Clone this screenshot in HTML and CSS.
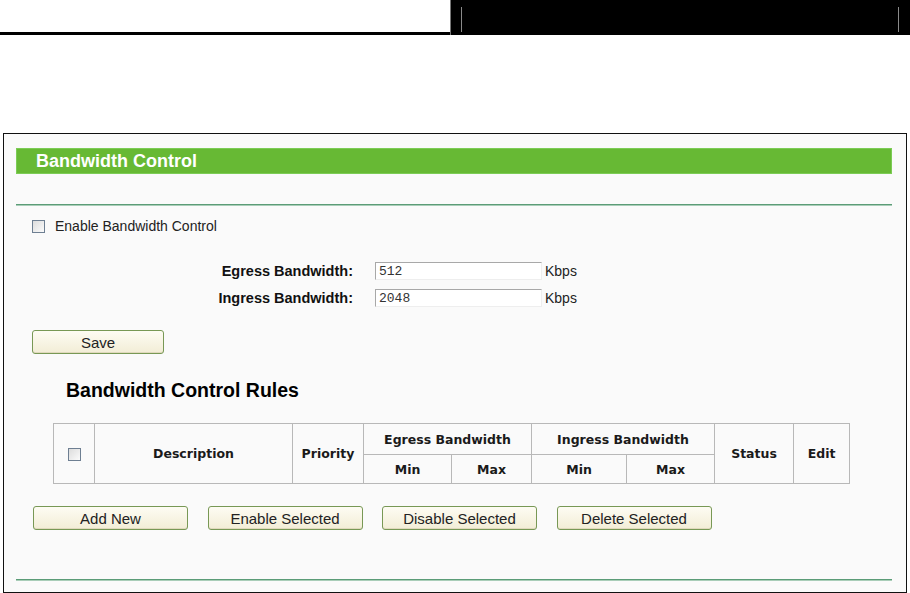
FILE: index.html
```html
<!DOCTYPE html>
<html>
<head>
<meta charset="utf-8">
<title>Bandwidth Control</title>
<link rel="stylesheet" href="styles.css">
</head>
<body>
<div class="header">
  <div class="header-left"></div>
  <div class="header-right"><div class="header-inner"></div></div>
</div>
<div class="panel">
  <div class="title-bar">Bandwidth Control</div>
  <div class="sep"></div>
  <label class="enable-row"><span class="cb"></span><span>Enable Bandwidth Control</span></label>
  <div class="form">
    <div class="form-row">
      <span class="form-label">Egress Bandwidth:</span>
      <span class="input">512</span>
      <span class="unit">Kbps</span>
    </div>
    <div class="form-row">
      <span class="form-label">Ingress Bandwidth:</span>
      <span class="input">2048</span>
      <span class="unit">Kbps</span>
    </div>
  </div>
  <button class="btn btn-save">Save</button>
  <h2 class="rules-title">Bandwidth Control Rules</h2>
  <table class="rules">
    <colgroup>
      <col class="c1"><col class="c2"><col class="c3"><col class="c4"><col class="c5"><col class="c6"><col class="c7"><col class="c8"><col class="c9">
    </colgroup>
    <tr class="r1">
      <th rowspan="2"><span class="cb cb-table"></span></th>
      <th rowspan="2">Description</th>
      <th rowspan="2">Priority</th>
      <th colspan="2">Egress Bandwidth</th>
      <th colspan="2">Ingress Bandwidth</th>
      <th rowspan="2">Status</th>
      <th rowspan="2">Edit</th>
    </tr>
    <tr class="r2">
      <th>Min</th><th>Max</th><th>Min</th><th>Max</th>
    </tr>
  </table>
  <div class="actions">
    <button class="btn btn-wide">Add New</button>
    <button class="btn btn-wide">Enable Selected</button>
    <button class="btn btn-wide">Disable Selected</button>
    <button class="btn btn-wide">Delete Selected</button>
  </div>
  <div class="sep sep-bottom"></div>
</div>
</body>
</html>
```
FILE: styles.css
```css
html, body {
  margin: 0;
  padding: 0;
  background: #ffffff;
  font-family: "Liberation Sans", Arial, sans-serif;
  color: #1a1a1a;
}

.header {
  display: flex;
  height: 35px;
}
.header-left {
  width: 450px;
  height: 32px;
  border-bottom: 3px solid #000;
}
.header-right {
  flex: 1;
  background: #000;
  border-left: 1px solid #777;
  padding: 7px 11px 0 10px;
  box-sizing: border-box;
}
.header-inner {
  height: 25px;
  border-left: 1px solid #8a8a8a;
  border-right: 1px solid #8a8a8a;
}

.panel {
  margin: 98px 0 0 3px;
  width: 904px;
  box-sizing: border-box;
  border: 1px solid #111;
  background: #fafafa;
  padding: 14px 14px 11px 12px;
}

.title-bar {
  height: 26px;
  line-height: 25px;
  background: #67b934;
  color: #fff;
  font-weight: bold;
  font-size: 18px;
  padding-left: 19px;
  box-sizing: border-box;
  border: 1px solid #7ccc55;
}

.sep {
  margin-top: 30px;
  height: 2px;
  background: #5b9c77;
  border-bottom: 1px solid #a9cdb8;
  box-sizing: border-box;
}

.enable-row {
  display: flex;
  align-items: center;
  margin: 13px 0 0 16px;
  height: 14px;
  font-size: 14px;
  color: #222;
}
.cb {
  display: inline-block;
  width: 11px;
  height: 11px;
  border: 1px solid #6e7f92;
  background: linear-gradient(135deg, #dcdcdc, #fbfbfb);
  margin-right: 10px;
  flex: none;
}

.form {
  margin-top: 29px;
  display: flex;
  flex-direction: column;
  gap: 9px;
}
.form-row {
  display: flex;
  align-items: center;
  height: 18px;
}
.form-label {
  width: 337px;
  text-align: right;
  font-weight: bold;
  font-size: 14.5px;
  color: #111;
}
.input {
  margin-left: 22px;
  width: 167px;
  height: 18px;
  box-sizing: border-box;
  background: #fff;
  border-top: 1px solid #a8a8a8;
  border-left: 1px solid #a8a8a8;
  border-right: 1px solid #eeeeee;
  border-bottom: 1px solid #eeeeee;
  font-family: "Liberation Mono", "Courier New", monospace;
  font-size: 13px;
  line-height: 17px;
  padding-left: 3px;
  color: #333;
}
.unit {
  margin-left: 3px;
  font-size: 14px;
  color: #222;
}

.btn {
  display: block;
  height: 24px;
  box-sizing: border-box;
  border: 1px solid #789855;
  border-radius: 3px;
  background: linear-gradient(#fdfcf3, #f2edd6);
  font-family: "Liberation Sans", Arial, sans-serif;
  font-size: 15px;
  color: #222;
  padding: 0;
  box-shadow: inset 0 -1px 0 #e0d9bd;
}
.btn-save {
  margin: 23px 0 0 16px;
  width: 132px;
}

.rules-title {
  margin: 25px 0 0 50px;
  font-size: 19.5px;
  line-height: 22px;
  font-weight: bold;
  color: #000;
}

.rules {
  margin: 22px 0 0 37px;
  border-collapse: collapse;
  table-layout: fixed;
  width: 797px;
  border: 1px solid #a5a5a5;
  background: #fafafa;
}
.rules th {
  border: 1px solid #b8b8b8;
  font-family: "DejaVu Sans", Verdana, sans-serif;
  font-size: 12.5px;
  font-weight: bold;
  color: #1a1a1a;
  padding: 0;
  text-align: center;
}
.rules .r1 th { height: 30px; }
.rules .r2 th { height: 28px; }
.cb-table { margin: 0; vertical-align: middle; }
.c1 { width: 41px; }
.c2 { width: 198px; }
.c3 { width: 71px; }
.c4 { width: 88px; }
.c5 { width: 80px; }
.c6 { width: 95px; }
.c7 { width: 88px; }
.c8 { width: 79px; }
.c9 { width: 56px; }

.actions {
  display: flex;
  gap: 19.5px;
  margin: 22px 0 0 17px;
}
.btn-wide { width: 155px; }

.sep-bottom {
  margin-top: 49px;
}
```
